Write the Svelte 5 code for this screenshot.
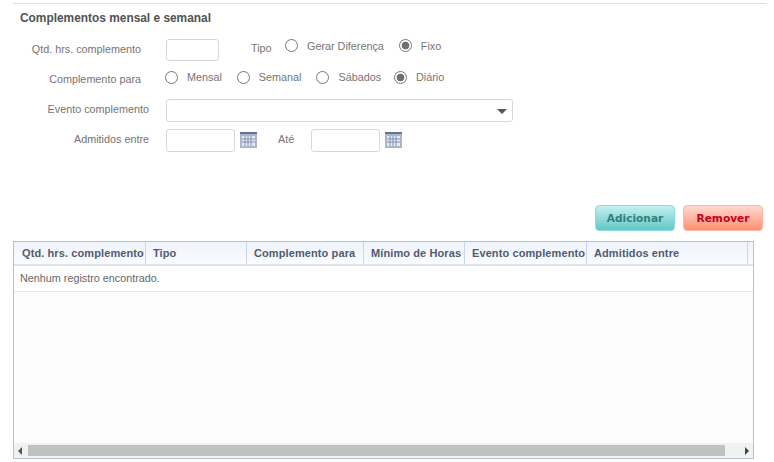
<script>
  const columns = [
    { label: 'Qtd. hrs. complemento', width: 132 },
    { label: 'Tipo', width: 101 },
    { label: 'Complemento para', width: 117 },
    { label: 'Mínimo de Horas', width: 101 },
    { label: 'Evento complemento', width: 122 },
    { label: 'Admitidos entre', width: 161 }
  ]
  const paraOptions = [
    { label: 'Mensal', checked: false },
    { label: 'Semanal', checked: false },
    { label: 'Sábados', checked: false },
    { label: 'Diário', checked: true }
  ]
</script>

{#snippet calendar()}
  <svg class="cal" width="17" height="16" viewBox="0 0 17 16">
    <rect x="0" y="0" width="17" height="16" fill="#a9b6cb" />
    <rect x="0" y="0" width="17" height="2" fill="#66758f" />
    <rect x="2" y="4" width="13" height="10" fill="#e4e9f2" />
    <path d="M5 4v10M8 4v10M11 4v10M2 7h13M2 10h13" stroke="#8092b0" stroke-width="1" fill="none" />
  </svg>
{/snippet}

{#snippet radio(checked)}
  <span class="radio" class:checked></span>
{/snippet}

<div class="page">
  <h3 class="title">Complementos mensal e semanal</h3>

  <div class="form">
    <div class="row row-qtd">
      <span class="lbl short">Qtd. hrs. complemento</span>
      <input class="txt qtd" type="text" />
      <span class="lbl-tipo">Tipo</span>
      <span class="opts tipo-opts">
        <span class="opt">{@render radio(false)}<span>Gerar Diferença</span></span>
        <span class="opt">{@render radio(true)}<span>Fixo</span></span>
      </span>
    </div>

    <div class="row row-para">
      <span class="lbl short">Complemento para</span>
      <span class="opts para-opts">
        {#each paraOptions as o}
          <span class="opt">{@render radio(o.checked)}<span>{o.label}</span></span>
        {/each}
      </span>
    </div>

    <div class="row row-evento">
      <span class="lbl">Evento complemento</span>
      <div class="select"><span class="arrow"></span></div>
    </div>

    <div class="row row-datas">
      <span class="lbl">Admitidos entre</span>
      <input class="txt date" type="text" />
      {@render calendar()}
      <span class="lbl-ate">Até</span>
      <input class="txt date" type="text" />
      {@render calendar()}
    </div>
  </div>

  <div class="actions">
    <button class="btn add">Adicionar</button>
    <button class="btn remove">Remover</button>
  </div>

  <div class="table">
    <div class="thead">
      {#each columns as c}
        <div class="th" style="width: {c.width}px">{c.label}</div>
      {/each}
    </div>
    <div class="empty">Nenhum registro encontrado.</div>
    <div class="tbody"></div>
    <div class="scrollbar">
      <span class="tri left"></span>
      <div class="track"><div class="thumb"></div></div>
      <span class="tri right"></span>
    </div>
  </div>
</div>

<style>
  :global(body) {
    margin: 0;
    background: #fff;
  }

  .page {
    width: 774px;
    height: 462px;
    box-sizing: border-box;
    padding: 3px 0 0 13px;
    overflow: hidden;
    font-family: "Liberation Sans", Arial, sans-serif;
    font-size: 10.8px;
    color: #747474;
  }

  .title {
    width: 753px;
    margin: 0;
    padding: 7px 0 0 7px;
    height: 28px;
    box-sizing: border-box;
    border-top: 1px solid #ddd;
    font-size: 11.9px;
    line-height: 15px;
    font-weight: bold;
    color: #525252;
  }

  .row {
    display: flex;
    align-items: center;
  }

  .row-qtd {
    height: 22px;
    margin-top: 8px;
  }

  .row-para {
    height: 22px;
    margin-top: 7px;
  }

  .row-evento {
    height: 23px;
    margin-top: 9px;
  }

  .row-datas {
    height: 23px;
    margin-top: 7px;
  }

  .row-evento .lbl,
  .row-datas .lbl,
  .lbl-ate {
    margin-bottom: 3px;
  }

  .row-qtd .lbl {
    margin-bottom: 3px;
  }

  .lbl {
    width: 136px;
    margin-right: 17px;
    text-align: right;
    flex: none;
  }

  .lbl.short {
    width: 128px;
    margin-right: 25px;
  }

  .txt {
    box-sizing: border-box;
    height: 100%;
    padding: 0;
    border: 1px solid #d8d8d8;
    border-radius: 3px;
    background: #fff;
    flex: none;
  }

  .qtd {
    width: 53px;
  }

  .date {
    width: 69px;
  }

  .lbl-tipo {
    margin: 0 0 5px 32px;
    width: 34px;
    flex: none;
  }

  .opts {
    display: flex;
    align-items: center;
  }

  .tipo-opts {
    gap: 15px;
    margin-bottom: 9px;
  }

  .para-opts {
    gap: 15px;
    margin: 0 0 4px -1px;
  }

  .para-opts .opt:last-child {
    margin-left: -2px;
  }

  .opt {
    display: flex;
    align-items: center;
    gap: 9px;
  }

  .radio {
    box-sizing: border-box;
    width: 13px;
    height: 13px;
    border: 1px solid #777;
    border-radius: 50%;
    background: #fff;
    flex: none;
  }

  .radio.checked {
    background: radial-gradient(circle, #707070 0 3.5px, #fff 4.2px);
  }

  .select {
    box-sizing: border-box;
    width: 347px;
    height: 100%;
    border: 1px solid #d8d8d8;
    border-radius: 3px;
    display: flex;
    align-items: center;
    justify-content: flex-end;
    padding-right: 5px;
  }

  .arrow {
    width: 0;
    height: 0;
    border-left: 5px solid transparent;
    border-right: 5px solid transparent;
    border-top: 5px solid #555;
    margin-top: 1px;
  }

  .cal {
    margin: 0 0 2px 5px;
    flex: none;
  }

  .lbl-ate {
    margin-left: 21px;
    width: 33px;
    flex: none;
  }

  .actions {
    display: flex;
    justify-content: flex-end;
    gap: 8px;
    width: 750px;
    margin-top: 53px;
    height: 26px;
  }

  .btn {
    box-sizing: border-box;
    width: 80px;
    height: 26px;
    padding: 0;
    border-radius: 4px;
    font-family: "DejaVu Sans", Verdana, sans-serif;
    font-size: 10.6px;
    font-weight: bold;
  }

  .add {
    border: 1px solid #8fdada;
    background: linear-gradient(#c3f0ee, #62c8c6);
    color: #2f7f7f;
  }

  .remove {
    border: 1px solid #ffb8a6;
    background: linear-gradient(#ffd9d2, #ff8f70);
    color: #c4001c;
  }

  .table {
    box-sizing: border-box;
    width: 741px;
    height: 218px;
    margin-top: 10px;
    border: 1px solid #b6c2d4;
    display: flex;
    flex-direction: column;
    background: #fff;
  }

  .thead {
    display: flex;
    flex: none;
    height: 24px;
    box-sizing: border-box;
    border-bottom: 2px solid #dde4ee;
    background: linear-gradient(#eef2fb, #fbfcff);
    font-size: 11px;
    font-weight: bold;
    color: #505c6e;
  }

  .th {
    box-sizing: border-box;
    flex: none;
    padding: 0 0 0 7px;
    border-right: 1px solid #ccd6e4;
    line-height: 22px;
    white-space: nowrap;
    letter-spacing: 0.1px;
  }

  .th:first-child {
    padding-left: 8px;
  }

  .empty {
    flex: none;
    height: 26px;
    box-sizing: border-box;
    padding-left: 6px;
    line-height: 25px;
    border-bottom: 1px solid #e8e8e8;
    color: #666;
  }

  .tbody {
    flex: 1;
    background: #fcfcfc;
  }

  .scrollbar {
    flex: none;
    height: 15px;
    display: flex;
    align-items: center;
    background: #f1f1f1;
  }

  .track {
    flex: 1;
    height: 11px;
    margin: 0 6px;
  }

  .thumb {
    width: 697px;
    height: 100%;
    background: #c1c1c1;
  }

  .tri {
    flex: none;
    width: 0;
    height: 0;
    border-top: 4px solid transparent;
    border-bottom: 4px solid transparent;
  }

  .tri.left {
    border-right: 4px solid #555;
    margin-left: 4px;
  }

  .tri.right {
    border-left: 4px solid #444;
    margin-right: 4px;
  }
</style>
